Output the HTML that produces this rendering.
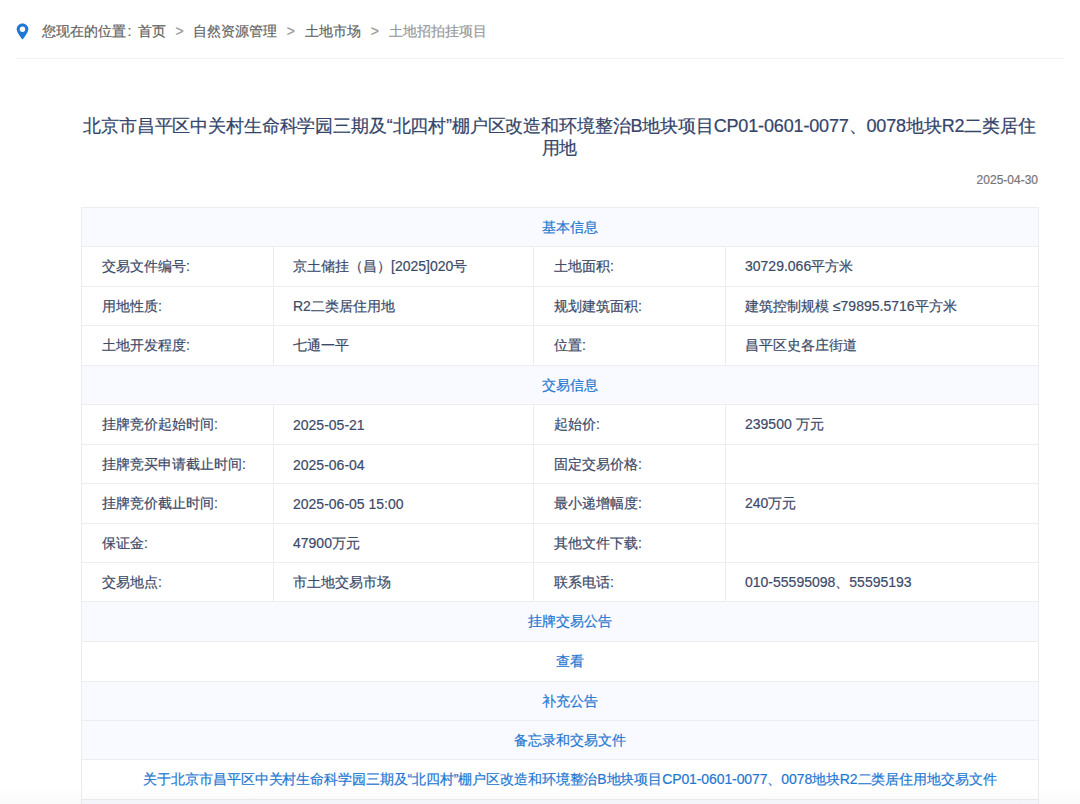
<!DOCTYPE html>
<html><head><meta charset="utf-8">
<style>
html,body{margin:0;padding:0;background:#fff;}
body{width:1080px;height:804px;overflow:hidden;position:relative;font-family:"Liberation Sans",sans-serif;color:#3d4a68;-webkit-text-stroke:0.2px currentColor;}
.crumb{position:absolute;left:42px;top:23px;height:16px;line-height:16px;font-size:14px;color:#636363;white-space:nowrap;}
.crumb .sep{color:#999;margin:0 9px;}
.crumb .last{color:#999;}
.pin{position:absolute;left:16px;top:23px;}
.hr{position:absolute;left:17px;top:58px;width:1046px;height:1px;background:#efefef;}
.title{position:absolute;left:81px;top:114.5px;letter-spacing:-0.15px;width:957px;text-align:center;font-size:18px;line-height:22px;color:#34446a;white-space:nowrap;}
.date{position:absolute;right:42px;top:173px;font-size:12px;line-height:14px;color:#757575;}
.shade{position:absolute;left:0;top:788px;width:1080px;height:16px;background:linear-gradient(rgba(0,0,0,0),rgba(0,0,0,0.025));}
.table{position:absolute;left:0;top:0;}
.row{position:absolute;left:81px;width:958px;box-sizing:border-box;border:1px solid #ededed;border-bottom:none;}
.row.c{text-align:center;color:#1f78d1;font-size:14px;padding-left:20px;box-sizing:border-box;display:flex;align-items:center;justify-content:center;padding-top:1px;}
.cell{position:absolute;top:0;bottom:0;box-sizing:border-box;padding-left:20px;font-size:14px;display:flex;align-items:center;white-space:nowrap;padding-top:1px;}
.cell+.cell{border-left:1px solid #ededed;}
</style></head><body>
<svg class="pin" width="13" height="17" viewBox="0 0 13 17"><path d="M6.5 0.5C3.2 0.5 0.7 3 0.7 6.2c0 3.6 5.8 10.3 5.8 10.3s5.8-6.7 5.8-10.3C12.3 3 9.8 0.5 6.5 0.5z" fill="#1f78d1"/><circle cx="6.5" cy="6.3" r="2.7" fill="#fff"/></svg>
<div class="crumb">您现在的位置<span style="margin:0 7px 0 1.5px">:</span>首页<span class="sep" style="margin:0 9.5px 0 9px">&gt;</span>自然资源管理<span class="sep" style="margin:0 10.3px 0 9.7px">&gt;</span>土地市场<span class="sep" style="margin:0 10px 0 9.5px">&gt;</span><span class="last">土地招拍挂项目</span></div>
<div class="hr"></div>
<div class="title">北京市昌平区中关村生命科学园三期及“北四村”棚户区改造和环境整治B地块项目CP01-0601-0077、0078地块R2二类居住<br>用地</div>
<div class="date">2025-04-30</div>
<div class="row c" style="top:207px;height:39px;background:#f8faff"><span>基本信息</span></div>
<div class="row" style="top:246px;height:40px">
<div class="cell" style="left:0px;width:192px;padding-left:20px"><span>交易文件编号:</span></div>
<div class="cell" style="left:191px;width:260px;padding-left:19px"><span>京土储挂（昌）[2025]020号</span></div>
<div class="cell" style="left:451px;width:192px;padding-left:20px"><span>土地面积:</span></div>
<div class="cell" style="left:643px;width:314px;padding-left:19px"><span>30729.066平方米</span></div>
</div>
<div class="row" style="top:286px;height:39px">
<div class="cell" style="left:0px;width:192px;padding-left:20px"><span>用地性质:</span></div>
<div class="cell" style="left:191px;width:260px;padding-left:19px"><span>R2二类居住用地</span></div>
<div class="cell" style="left:451px;width:192px;padding-left:20px"><span>规划建筑面积:</span></div>
<div class="cell" style="left:643px;width:314px;padding-left:19px"><span>建筑控制规模 ≤79895.5716平方米</span></div>
</div>
<div class="row" style="top:325px;height:40px">
<div class="cell" style="left:0px;width:192px;padding-left:20px"><span>土地开发程度:</span></div>
<div class="cell" style="left:191px;width:260px;padding-left:19px"><span>七通一平</span></div>
<div class="cell" style="left:451px;width:192px;padding-left:20px"><span>位置:</span></div>
<div class="cell" style="left:643px;width:314px;padding-left:19px"><span>昌平区史各庄街道</span></div>
</div>
<div class="row c" style="top:365px;height:39px;background:#f8faff"><span>交易信息</span></div>
<div class="row" style="top:404px;height:40px">
<div class="cell" style="left:0px;width:192px;padding-left:20px"><span>挂牌竞价起始时间:</span></div>
<div class="cell" style="left:191px;width:260px;padding-left:19px"><span>2025-05-21</span></div>
<div class="cell" style="left:451px;width:192px;padding-left:20px"><span>起始价:</span></div>
<div class="cell" style="left:643px;width:314px;padding-left:19px"><span>239500 万元</span></div>
</div>
<div class="row" style="top:444px;height:39px">
<div class="cell" style="left:0px;width:192px;padding-left:20px"><span>挂牌竞买申请截止时间:</span></div>
<div class="cell" style="left:191px;width:260px;padding-left:19px"><span>2025-06-04</span></div>
<div class="cell" style="left:451px;width:192px;padding-left:20px"><span>固定交易价格:</span></div>
<div class="cell" style="left:643px;width:314px;padding-left:19px"><span></span></div>
</div>
<div class="row" style="top:483px;height:40px">
<div class="cell" style="left:0px;width:192px;padding-left:20px"><span>挂牌竞价截止时间:</span></div>
<div class="cell" style="left:191px;width:260px;padding-left:19px"><span>2025-06-05 15:00</span></div>
<div class="cell" style="left:451px;width:192px;padding-left:20px"><span>最小递增幅度:</span></div>
<div class="cell" style="left:643px;width:314px;padding-left:19px"><span>240万元</span></div>
</div>
<div class="row" style="top:523px;height:39px">
<div class="cell" style="left:0px;width:192px;padding-left:20px"><span>保证金:</span></div>
<div class="cell" style="left:191px;width:260px;padding-left:19px"><span>47900万元</span></div>
<div class="cell" style="left:451px;width:192px;padding-left:20px"><span>其他文件下载:</span></div>
<div class="cell" style="left:643px;width:314px;padding-left:19px"><span></span></div>
</div>
<div class="row" style="top:562px;height:39px">
<div class="cell" style="left:0px;width:192px;padding-left:20px"><span>交易地点:</span></div>
<div class="cell" style="left:191px;width:260px;padding-left:19px"><span>市土地交易市场</span></div>
<div class="cell" style="left:451px;width:192px;padding-left:20px"><span>联系电话:</span></div>
<div class="cell" style="left:643px;width:314px;padding-left:19px"><span>010-55595098、55595193</span></div>
</div>
<div class="row c" style="top:601px;height:40px;background:#f8faff"><span>挂牌交易公告</span></div>
<div class="row c" style="top:641px;height:40px;background:#fff"><span>查看</span></div>
<div class="row c" style="top:681px;height:39px;background:#f8faff"><span>补充公告</span></div>
<div class="row c" style="top:720px;height:39px;background:#f8faff"><span>备忘录和交易文件</span></div>
<div class="row c" style="top:759px;height:40px;background:#fff"><span style="letter-spacing:-0.1px">关于北京市昌平区中关村生命科学园三期及“北四村”棚户区改造和环境整治B地块项目CP01-0601-0077、0078地块R2二类居住用地交易文件</span></div>
<div class="row c" style="top:799px;height:41px;background:#f8faff"><span></span></div>
<div class="shade"></div>
</body></html>
